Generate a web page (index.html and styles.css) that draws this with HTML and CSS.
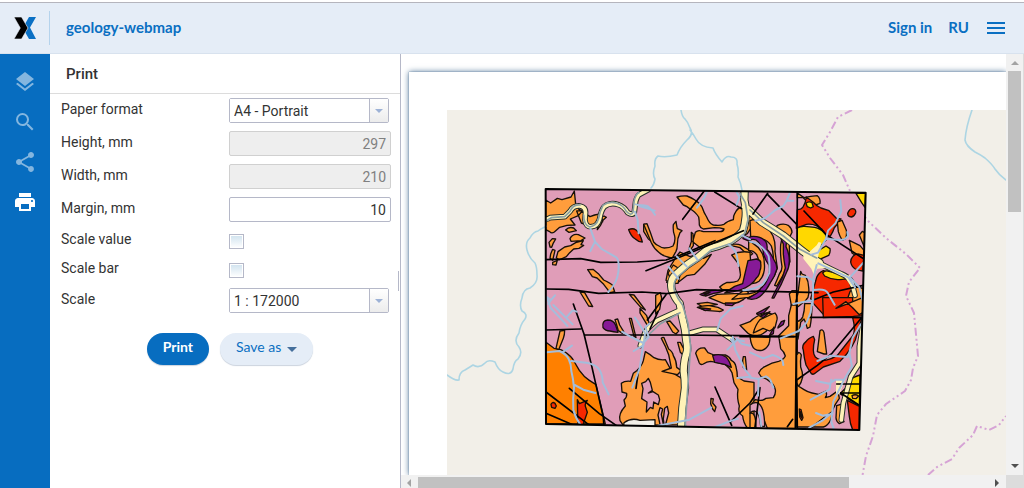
FILE: index.html
```html
<!DOCTYPE html>
<html lang="en">
<head>
<meta charset="utf-8">
<title>geology-webmap</title>
<link rel="stylesheet" href="styles.css">
</head>
<body>
<header class="header">
  <a class="logo" href="#" aria-label="Home">
    <svg width="22" height="22" viewBox="0 0 22 22"><path fill="#0a70c4" d="M15 0h7l-6 10.500 6 11.500h-7l-4-7 3-4-3-4z"/><path fill="#000" stroke="#e5edf7" stroke-width=".6" d="M0 0h7.500L14 11 7.500 22H0l6.300-11z"/></svg>
  </a>
  <h1 class="site"><a href="#">geology-webmap</a></h1>
  <nav class="header-nav">
    <a href="#">Sign in</a>
    <a href="#">RU</a>
    <button class="burger" type="button" aria-label="Menu"><i></i><i></i><i></i></button>
  </nav>
</header>
<main class="workspace">
  <nav class="rail">
    <button type="button" aria-label="Layers"><svg viewBox="0 0 24 24"><path d="M11.990 18.540l-7.370-5.730L3 14.070l9 7 9-7-1.630-1.270-7.380 5.740zM12 16l7.360-5.730L21 9l-9-7-9 7 1.630 1.270L12 16z"/></svg></button>
    <button type="button" aria-label="Search"><svg viewBox="0 0 24 24"><path d="M15.500 14h-.79l-.28-.27A6.471 6.471 0 0 0 16 9.500 6.500 6.500 0 1 0 9.500 16c1.610 0 3.090-.59 4.230-1.570l.27.28v.79l5 4.990L20.490 19l-4.990-5zm-6 0C7.010 14 5 11.990 5 9.500S7.010 5 9.500 5 14 7.010 14 9.500 11.990 14 9.500 14z"/></svg></button>
    <button type="button" aria-label="Share"><svg viewBox="0 0 24 24"><path d="M18 16.080c-.76 0-1.440.3-1.960.77L8.910 12.700c.05-.23.09-.46.09-.7s-.04-.47-.09-.7l7.050-4.110c.54.5 1.250.81 2.040.81 1.660 0 3-1.340 3-3s-1.340-3-3-3-3 1.340-3 3c0 .24.040.47.090.7L8.040 9.810C7.500 9.310 6.790 9 6 9c-1.660 0-3 1.340-3 3s1.340 3 3 3c.79 0 1.500-.31 2.040-.81l7.120 4.160c-.05.21-.08.43-.08.65 0 1.610 1.310 2.920 2.920 2.920s2.920-1.310 2.920-2.920-1.310-2.920-2.920-2.920z"/></svg></button>
    <button type="button" class="active" aria-label="Print map"><svg viewBox="0 0 24 24"><path d="M19 8H5c-1.660 0-3 1.340-3 3v6h4v4h12v-4h4v-6c0-1.660-1.340-3-3-3zm-3 11H8v-5h8v5zm3-7c-.55 0-1-.45-1-1s.45-1 1-1 1 .45 1 1-.45 1-1 1zm-1-9H6v4h12V3z"/></svg></button>
  </nav>
  <section class="panel">
    <h2 class="panel-title">Print</h2>
    <form class="form">
      <div class="row"><label for="paper">Paper format</label><div class="combo"><select id="paper"><option>A4 - Portrait</option></select><span class="trigger"></span></div></div>
      <div class="row"><label for="height">Height, mm</label><input class="num" id="height" type="text" value="297" disabled></div>
      <div class="row"><label for="width">Width, mm</label><input class="num" id="width" type="text" value="210" disabled></div>
      <div class="row"><label for="margin">Margin, mm</label><input class="num" id="margin" type="text" value="10"></div>
      <div class="row check-row"><label for="sv">Scale value</label><input class="check" id="sv" type="checkbox"></div>
      <div class="row check-row"><label for="sb">Scale bar</label><input class="check" id="sb" type="checkbox"></div>
      <div class="row"><label for="scale">Scale</label><div class="combo"><select id="scale"><option>1 : 172000</option></select><span class="trigger"></span></div></div>
      <div class="actions"><button class="btn primary" type="button">Print</button><button class="btn" type="button">Save as <span class="caret"></span></button></div>
    </form>
    <span class="grip"></span>
  </section>
  <section class="preview">
    <div class="viewport">
      <div class="paper">
        <svg class="map" viewBox="0 0 1677 1095" preserveAspectRatio="xMinYMin slice" role="img" aria-label="Geological map">
          <defs><clipPath id="sheet"><path d="M296 237L1256 248 1237 960 297 942z"/></clipPath></defs>
          <rect class="land" width="1677" height="1095"/>
          <g transform="translate(-1341 -330) scale(3)">
            <path class="river" d="M447 375q8 6 12 5 0-8 6-10 5-3 8-5 6 4 12-2 3-4 10-1 3 8 8 10 8 4 10-3 1-8 5-10 5-6 1-12-6-6 0-14 1-8 6-14 3-5-3-8-3-5 0-13 1-9 8-10 8-5 7-13 0-8-2-12-6-5-8-13-2-8 3-12 3-6 8-7 5-4 13-6M681 110q1 7 4 9 3 3 5 9 4 6-3 12-7 7-10 15-12 3-19 1-4 3-3 10-3 8 0 13-1 6-4 9M690 130q4 5 6 9 4 8 17 9 2 6 9 14 4-7 9-5 7 0 6 7 2 6 1 13 3 6 4 13M972 110q-6 17-7 30 1 6 10 12 6 3 10 6 7 6 10 11 4 6 11 11"/>
            <path class="boundary" d="M852 110l-14 7-8 15-8 13 8 13 13 17 7 16 17 29 19 18 20 16 14 14-11 14-3 14 8 17 4 43-5 12-2 12-6 11-19 13-9 11-4 21-7 20-4 22M928 475l9-8 15-8 7-11 14-13 4-9 12 4 10-5 7-9"/>
          </g>
          <g clip-path="url(#sheet)">
            <rect class="pink" width="1677" height="1095"/>
            <g transform="translate(279 210)">
              <path class="o" d="M17 60l15 9 20-14 14 4 27-8 10-18 4 40 10 15 10 5-12 14-24 10 14 18-24 1-22 6-16 14q-8 6-14-1l-12-6zM110 93l12-1 28 18 14-5 20-4 4 24-16 4-8 14-10-4-30-10zM180 114l12-6 7 4-10 9-8 16-9 12 2-16zM77 150q10-11 24-6l8 8-22 5zM90 176q8-16 25-12l20 10-12 8-30 2zM30 201l-3-14 10-11 10 1-8 14-4 11zM32 222l6-14 7 3-7 30-8-6zM49 233l5-18 20-14 18-4 15-9 23-6-7 12 8 2-14 9-16 2-12 11-10 12-22 10zM38 247l14-6-4 14-10-1zM143 269l16-1 16 13 16 19q24 12 26 15l7 20-14 3-19-25-20-19-14-4z"/>
              <path class="o" d="M120 336l14 2 24 42-12-2zM268 343l14 2 34 45-13-7zM311 133q8-3 12 10l10 40-8-6-14-23z"/>
              <path class="r" d="M266 149q12-6 22 1 12 9 19 36-12 0-21-9-13-8-20-28z"/>
            </g>
            <g transform="translate(579 210)">
              <path class="o" d="M111 51q14-4 30-3 14 5 25 13 14 8 20 20 6 18 14 30 8 20 20 24 20 3 32-2 10-10 28-14 0-12 4-18 8-18 22-20 20-6 30 2l4 50-18 28-40 20-30 14-36 4-20 16-38-30 8-28q8-8 18-4l6 2 50 0q10 0 12-8-12-4-28-4l-34 4q-10-4-12-12 0-14-2-24-12-18-26-24-8-8-20-12zM11 133l10-2q10 24 20 55 6 8 16 12 8 6 16 6 16 0 26-6 8-14 5-30-6-14-4-34l8-10q2 14 4 22l14 6-6 6q-8 16-8 36 0 12-4 20l-10 18q-10 2-18-2-14-4-22-12-16-12-24-30zM154 157l5 4 1 36-9 13-4-3 7-22zM110 228l10-12 30 14 34-10 6 15 24-12-20 30-20 20-10 10-24 4-28 22-20 4-14-12 6-30z"/>
              <path class="o" d="M100 255l-16 24 4 10 14-4-22 22 10 3 24 0 10-40zM274 193q20-2 30 3 20 10 34 25l-16 12q-8-20-22-30-18-6-40-7z"/>
              <path class="p" d="M310 165l25 11-6 8-20-8zM183 343q24-14 50-12l24-3q-12 10-36 12l-24 8z"/>
              <path class="o" d="M275 225q26-14 55-8l3 44q-4 24-14 40-10 14-22 20-20 10-50 8l-8-8q8-8 22-14 16 2 32-4 10-10 8-22-2-20-6-30zM207 353l24-10 68-3q10-8 18-12l8 10q-4 12-14 20-14 10-30 13h-30zM47 346l14-8 4 16-6 34-12 14zM172 371l30-4 30 6-44 8z"/>
            </g>
            <g transform="translate(909 210)">
              <path class="o" d="M0 122q18-8 45 6l24 40q8 20 6 46l7 50q-6 20-17 36-10 18-23 28-18 14-46 24l-50 6 20-16q26 2 46-4 20-8 30-22 14-16 20-38 10-20 8-42 0-20-6-38-10-16-24-20-16-8-38-8zM82 136q20-8 34 1 10 8 10 20-10 14-8 34 0 30 2 54-6 20-17 34l-23 39-6-2q8-18 14-34 8-10 8-22-6-34-4-66 4-16 4-30-6-12-20-18zM-4 187q8-2 14 4 16 10 23 23 10 14 10 36 2 16-2 29-4 16-14 25-10 8-27 6l-8-8q16 0 26-8 10-20 7-40 2-18-5-30-10-14-24-12z"/>
              <path class="p" d="M0 170q30-4 47 14 6 10 4 24 12 12 20 30 10 14 10 28-6 24-20 42-14 28-32 42-10 8-24 8l-12-2q10-6 20-12 14-6 20-20 14-10 20-28 8-18 4-40-12-16-17-36 0-12-6-20-6-14-16-20-8-4-20 0zM-6 242l26-5q14 5 12 12 2 14-2 22-2 16-10 22-8 14-20 22-20 14-50 20l-26 4q14-10 30-20 12-4 24-8z"/>
              <path class="p" d="M98 158l12 12q0 16-2 30 10 20 10 42 0 20-8 34-16 40-38 78l-6 0q8-18 18-36 16-26 22-54-4-20-6-42l0-30-8-18z"/>
              <path class="o" d="M142 39l20 14 20-4 20-2q10 8 8 23l-14 5-20-6-18-17-16 1z"/>
              <path class="r" d="M142 89q12 0 17-8 8-12 10-30l20 15q10 12 24 18l24 8 22 23 14 2q-8 14-20 26-4 12-10 22l-6 6-12-10-10-14-16-10q-14-6-30-4l-30 12z"/>
              <path class="y" d="M142 144q10-6 22-5l30 3q18 4 28 16 10 8 8 20l-14 16-8 16 20-12 12 8q2 12-4 20l-22 10-10 2-62-40z"/>
              <path class="y" d="M168 70q8-8 18-2l4 12-8 4-10-4z"/>
              <path class="o" d="M262 126l14-5 13 30q2 14-2 24l-10 6q-8-12-12-26zM298 181l32 16 12 14-2 22-20-4-14-10z"/>
              <path class="r" d="M293 100q6-15 16-14 10 2 8 12-4 11-13 13-11 0-11-11z"/>
              <path class="y" d="M318 40l29 0-2 42-10-14z"/>
              <path class="r" d="M302 246q0-10 6-16 6-8 16-8l18 4-4 47q-14-2-22-6-12-8-14-21zM200 292q6-14 20-20l30 12 40 14q12 2 14 10 10 4 10 14-4 18-10 30l-16 20-20 40h-40l-40-44-6-12z"/>
              <path class="y" d="M218 279q6-8 16-6l50 13 4 10q-14 4-30 2-20-2-34-10z"/>
              <path class="o" d="M337 154l9 5-4 40-14-34zM152 274l4 8 10 4q10 18 10 36 2 16-2 30-8 14-20 20l-10 8-8-10 8-30zM300 335q10-12 24-14l20 6v60l-50 2-6-20zM118 342l8-10h15v60l-16-10z"/>
            </g>
            <g transform="translate(279 585)">
              <path class="do" d="M18 112l24 18 20 4q22 10 36 28l20 34q14 20 30 30l20 13 28 118H18z"/>
              <path class="o" d="M60 78l14-2q0 14-4 24l-14 34-8-4zM225 44l8-2 6 18 12 20-4 5-12-8-4-14zM268 40l6 0 14 58-6-4z"/>
              <path class="p" d="M189 68q-4-22 14-23 18 0 24 16l7 21q-14-1-24-4-14 0-21-10z"/>
              <path class="r" d="M33 298q4-9 12-3l4 8-4 7-10-3zM112 284l6 12 24-10q-8 10-6 18l6 18-14 40-14 2-1-30z"/>
              <path class="o" d="M244 235q10-8 28-6l8-24 10-8q16-14 20-30l6-27q14 8 26 18 14 8 34 6l22 40 34 20v135l-182 2-10-14q-6-20 16-44l-4-18q10-10 8-20l-14-4z"/>
              <path class="land-line" d="M252 353q22-16 48-7l45-2v28h-95z"/>
              <path class="pink-line" d="M325 220l-8 10-12 5 4 16-4 30 16 10-2 30 12-14 8 4 2-20 14 8 4-15-4-14-16-10-14 4 12-8-6-24z"/>
              <path class="pink-line" d="M354 330l6-22 8 4-4 16 6 30-8 10zM374 310l8-6 4 20-8 30-4 18-4-30z"/>
            </g>
            <g transform="translate(579 585)">
              <path class="o" d="M64 100q4-4 8-2l14 34q12 8 14 20 10 16 10 35l14 10-12 12-46-10 28-10q-4-20-8-40-8-24-22-49zM113 112l8 0 16 30-2 14-14-14zM80 50l10-2 26 30-8 9-10-6zM0 10l20 22 10 30-6 2-24-40zM167 145q6-18 27-16l10 14 18 7 34 0q12 4 18 16 12 6 14 20 4 14 4 30l20 12 30 4v137h-20q-12-16-14-36-16-10-10-30-8-24-4-50l-12-20-6-30q-6-14-20-24-24-8-44-10-12 0-22 8-8 4-12-3z"/>
              <path class="p" d="M218 152q22-8 40 4 10 10 16 31l-20-9-30-6z"/>
              <path class="o" d="M310 155l6 0 4 40-10-8-2-20zM213 280l7 2-2 12 10 12-4 14-6-8-6-16zM172 7q16-6 36-5l26 5 16 8q-8 6-14 4l-40-3zM330 50q20-20 50-26 20 2 30 12-4 18-20 30-20 26-40 25-20 2-30-10l-20-20z"/>
              <path class="p" d="M178 8l34 4-16 5zM256-6l30 0-10 8-20-2zM180-32l30-6-20 10z"/>
            </g>
            <g transform="translate(909 585)">
              <path class="o" d="M10 84q6-24 20-40l30-14 15-6q8 8 6 20l-6 24-16 10-20-8-20 10zM86 92l30-30 0-30 8-32h18v370H52l-12-30q-10-18-8-24l-28-18 12-14q22 6 32-4l22-2q8-12 6-24-4-16-14-22-12-12-28-16l-8-12q6-14 20-20 20-12 40-15 14-4 20-16-4-14-14-22zM0 95l60 2q0 12-4 22-8 14-20 17-14 2-22-4-10-6-14-37z"/>
              <path class="pink-line" d="M0 300q26-20 38 14 6 20 6 50H32q-2-40-18-46-8 0-14 6z"/>
              <path class="o" d="M142 50q12-4 16-14 6-20 6-40h22q0 40-6 70l-8 4q-4-16-10-28l-10 10-8 50zM140 150l6-8q6 2 8 8-4 18-2 36 6 14 6 30-4 18-12 28l-6-10zM210 77q8-7 12 6l8 64h-8l-20-7zM140 240l22 14q12 8 24 10l20 4 22-10q4 12-2 20l14-4 20-14q8 10 8 20-12 16-20 34 0 16-6 30-8 18-22 22H140z"/>
              <path class="p" d="M20 25l38-20-16 18-20 6zM30 34l30-14-20 18zM84 66l10-16 10-4-4 12-16 11zM58 92l14-26-2 20z"/>
              <path class="r" d="M218-22h90v30l20-4 10 28-28 2-90 4zM308 38h28l-14 46q-4 22-16 40-16 26-36 45l-50 17-24 18q-6 6-12 2-8-12-16-26-6-22-8-44-6-16 8-26 6-10 22-16l4 10q-4 16-4 32 0 12 6 20 12 10 30 10 20-4 36-15 22-28 46-58 10-16 0-55z"/>
              <path class="o" d="M258 10l30-12 50-20v45l-10 6-20-21-20-18z"/>
              <path class="r" d="M292 286l36 18v70h-20q-8-18-10-40z"/>
              <path class="y" d="M270 266l18-18 10-22q14-12 32-16l-2 92-40-24z"/>
              <path class="o" d="M306 272q10-6 20 1l-8 8-10-1zM260 302l20-6q6 10 2 20-10 10-8 20l8 14-14 6q-10-8-10-18zM0 325q18-6 18 44H0z"/>
              <path class="r" d="M148 312l5 2 6 24-4 8-6-10z"/>
              <path class="p" d="M150 320l3 2 2 16-3-4z"/>
            </g>
            <g transform="translate(279 210)">
              <path class="edge" d="M10 120q16-4 20-7l44-3 16-16q10-18 30-16 20 4 16 26l-1 16q2 22 20 20 18-2 24-24 4-24 14-36 18-14 42-6 18 6 28 24 16 10 20-2l4-32q6-20 14-22l24-13"/>
              <path class="valley" d="M10 120q16-4 20-7l44-3 16-16q10-18 30-16 20 4 16 26l-1 16q2 22 20 20 18-2 24-24 4-24 14-36 18-14 42-6 18 6 28 24 16 10 20-2l4-32q6-20 14-22l24-13"/>
              <path class="flow" d="M14 125l20-12 40-3 16-16q10-23 30-19M131 105q0 30 18 36 20-3 26-23 4-24 14-42 18-14 42-6 18 6 28 24 16 16 20 2l4-36q6-20 14-22"/>
            </g>
            <g transform="translate(579 210)">
              <path class="edge" d="M120 390l-70 32q-24 18-35 35l-14 40M140 462l50-14h40l30 20 18 12M668 440l-10 60v50l-26 40-22 80-6 50M535 248q40 20 70 34 20 8 30 24l10 40"/>
              <path class="edge thick" d="M315 0l-2 60q6 24 4 50-2 24-8 42-20 24-44 34-30 14-60 20l-34 28-30 20-34 30q-18 16-12 44 10 28 24 42l8 44q10 36 12 70 4 16 2 30-10 28-10 60 4 24 4 50l-8 60-4 60 12 50M315 80l50 46q30 18 64 40l50 40q24 20 60 42"/>
              <path class="valley" d="M120 390l-70 32q-24 18-35 35l-14 40M140 462l50-14h40l30 20 18 12M668 440l-10 60v50l-26 40-22 80-6 50M535 248q40 20 70 34 20 8 30 24l10 40"/>
              <path class="valley thick" d="M315 0l-2 60q6 24 4 50-2 24-8 42-20 24-44 34-30 14-60 20l-34 28-30 20-34 30q-18 16-12 44 10 28 24 42l8 44q10 36 12 70 4 16 2 30-10 28-10 60 4 24 4 50l-8 60-4 60 12 50M315 80l50 46q30 18 64 40l50 40q24 20 60 42"/>
              <path class="valley-fill" d="M490 218l18-2 22-20 6-10 8 2-10 44 4 18 28 14-34 2-10 20-8-20-24-30zM588 598l28 0-18 44-10 4zM614 290l18-6-6 14 16 36z"/>
              <path class="flow" d="M300 40l16 28 8 50-10 42-40 30-60 20-34 28-30 20-34 30q-20 18-12 46 10 24 24 42l16 54 8 72-6 80-4 60-6 90 8 50M330 90l40 38 60 40 50 40 50 26M120 398l-60 34-44 42"/>
            </g>
            <g transform="translate(279 210)">
              <path class="fault" d="M17 239l105-3 60 11 110-1 86-6 42-14 105-44M20 327l66 1 90 12 130-4 74 5 90-12 144 4 100 2 120 3"/>
            </g>
            <g transform="translate(579 210)">
              <path class="fault" d="M192 34l-64 84M224 36l80 50M18 272l86-34 206-86M22 420l56-76"/>
            </g>
            <g transform="translate(909 210)">
              <path class="fault" d="M53 40l-44 62M53 44l88 90M142 36l-2 340-4 370M162 93l66 70 120 78M190 360l60-24 90-20"/>
            </g>
            <g transform="translate(279 585)">
              <path class="fault" d="M18 75l104-3M100-3l32 90 24 100 34 150 2 30M132 90h290l180 2 160 3M18 261l128 98M18 325l80 34M88 250l90 76 60 42M296 192l-8 58M330 72l24-52"/>
            </g>
            <g transform="translate(579 585)">
              <path class="fault" d="M225 246l50 115M270 352l60-58 30-46-16 126M300 95h170"/>
            </g>
            <g transform="translate(909 585)">
              <path class="fault" d="M178 37h158l-90 108-44 36-62 44M260 237h68M272 264h56M272 264l58 38M140 225l2 145M180 370l64-48M112 365l16-22"/>
            </g>
            <g transform="translate(279 210)">
              <path class="stream" d="M0 139h18M151 145l14 40 20 22 44 25q10 10 6 44-4 34-30 60M165 185l-14 28M288 73l42 14M285 95l8 25 3 40M18 350l15 10 12-14M33 360l-8 12M20 350l12 34 38 40 12 14M298 78l46 14"/>
            </g>
            <g transform="translate(579 210)">
              <path class="stream" d="M-5 75q22 0 30 5 12 10 20 24M201 35l-8 18-22 30M85 260l30 36M110 229l30 30M148 205l24 34M266 194q18 12 24 30l6 34M290 36l8 16-8 22M303 0l2 32M306 166l24 12"/>
            </g>
            <g transform="translate(909 210)">
              <path class="stream" d="M16 122q16-2 30-8l30-24 24-12 10-16h20M110 62l10-24M0 185q20 2 30 12 18 14 26 32 4 24 2 50-8 20-20 34-26 16-58 18M271 60l3 34-18 36-22 22-6 24-24 42-20 6M228 176l42 4q16 0 24-12l-2-12M200 255l-10 40-2 80M142 289l30 2 20 12M205 250l90 42 20 30M300 292l40-44M300 292l28 30 10 40M130 372l60-12M190 330q36-6 44 10l20 34"/>
            </g>
            <g transform="translate(279 585)">
              <path class="stream" d="M40 0l38 38 20 20M78 38l20-22 12 4M20 142l38-4q20 8 28 24 8 16 8 36 6 24 8 50-4 34-2 66 6 24 22 46M70 140l26-18M94 168l50 6q24 6 34 20 10 16 10 38l18 36M104 240l26 14 36 10M285 38l30 46-4 36-30 18M311 110l-12 80-22 58M246 80l24 14 40 20 16-18-10-30 12-10"/>
            </g>
            <g transform="translate(579 585)">
              <path class="stream" d="M54 362l94-18 66-36M226 366l40-16 28-9M232 75l10-34 30-30 36-8M278 95l8 40 30 60 16 20-40 4M262 134l30-30 20 5M278 112l-6-10"/>
            </g>
            <g transform="translate(909 585)">
              <path class="stream" d="M0 142l40 18 28-10q22 6 30 18l2 12M-40 100l14 16 26 6M0 218l26 4 22-8q12 6 16 18l6 16M26 222l-2 50M28 322l6 42M92 100l54-22 24-26 12-30 4-30M332 58l-24 40-10 46-6 12-50-4-40 16M298 144l8 40-24 40-26 0-18 12-40-8M244 224l-6 30-56 30M284 220l-34 70-6 60 8 24M248 322l-30 24-40 22M248 326l-30 6-20-8"/>
            </g>
          </g>
          <path class="frame" d="M296 237L1256 248 1237 960 297 942z"/>
        </svg>
      </div>
    </div>
    <div class="vbar"><svg width="8" height="5" viewBox="0 0 8 5"><path fill="#a3a3a3" d="M0 4l4-4 4 4z"/></svg><span class="thumb"></span><svg class="end" width="8" height="5" viewBox="0 0 8 5"><path fill="#505050" d="M0 0h8L4 4z"/></svg></div>
    <div class="hbar"><svg width="5" height="8" viewBox="0 0 5 8"><path fill="#a3a3a3" d="M4 0v8L0 4z"/></svg><span class="thumb"></span><svg class="end" width="5" height="8" viewBox="0 0 5 8"><path fill="#505050" d="M0 0v8l4-4z"/></svg></div>
    <div class="corner"></div>
  </section>
</main>
</body>
</html>
```
FILE: styles.css
```css
* { box-sizing: border-box; }
body {
  margin: 0;
  height: 100vh;
  display: flex;
  flex-direction: column;
  padding-top: 2px;
  overflow: hidden;
  background: #fff;
  color: #333;
  font: 14px/20px Roboto, sans-serif;
}
button, input, select { font: inherit; color: inherit; }
button { border: 0; padding: 0; background: none; cursor: pointer; }
a { color: #0a6fc2; text-decoration: none; }

.header {
  flex: none;
  display: flex;
  align-items: center;
  height: 52px;
  border-top: 1px solid #b5b5bd;
  border-bottom: 1px solid #d8e2ee;
  background: #e5edf7;
  font: 700 15px/20px Lato, sans-serif;
}
.logo {
  display: flex;
  align-items: center;
  justify-content: center;
  width: 50px;
  height: 34px;
  border-right: 1px solid #b5d3ec;
}
.site { margin: 0; padding: 0 0 2px 16px; font: inherit; }
.header-nav { display: flex; align-items: center; gap: 16px; margin-left: auto; padding-right: 19px; }
.header-nav a { padding-bottom: 2px; }
.burger { display: flex; flex-direction: column; gap: 3px; width: 18px; margin-left: 2px; }
.burger i { height: 2px; background: #0a6fc2; }

.workspace { flex: 1; min-height: 0; display: flex; }
.rail { flex: none; display: flex; flex-direction: column; align-items: center; gap: 16px; width: 50px; padding-top: 16px; background: #076dc0; }
.rail button { display: flex; width: 24px; height: 24px; color: #84b6df; }
.rail .active { color: #fff; }
.rail svg { width: 24px; height: 24px; fill: currentColor; }

.panel { position: relative; flex: none; width: 351px; border-right: 1px solid #b5b8c8; }
.panel-title { margin: 0; height: 40px; padding: 10px 16px; border-bottom: 1px solid #dcdcdc; font: 500 15px/20px Roboto, sans-serif; }
.form { display: flex; flex-direction: column; gap: 8px; padding: 4px 9px 0 11px; }
.row { display: grid; grid-template-columns: 168px 1fr; height: 25px; }
.row label { padding-top: 1px; }
.check-row { height: 21px; }
.check-row label { padding-top: 0; line-height: 18px; }
.combo { display: flex; margin-right: 2px; border: 1px solid #b5b8c8; border-radius: 2px; }
.combo select { flex: 1; min-width: 0; appearance: none; border: 0; padding: 0 4px; background: #fff; }
.trigger { display: flex; align-items: center; justify-content: center; width: 19px; border-left: 1px solid #b5b8c8; background: linear-gradient(#fff, #ececec); }
.trigger::before, .caret { content: ""; border: 4px solid transparent; border-bottom: 0; border-top-color: #9db2d6; }
.num { width: 100%; min-width: 0; border: 1px solid #b5b8c8; border-radius: 2px; padding: 0 4px; background: #fff; text-align: right; }
.num:disabled { border-color: #d0d0d0; background: #eee; color: #808080; }
.check { appearance: none; align-self: center; width: 15px; height: 15px; margin: 2px 0 0; border: 1px solid #b5b8c8; box-shadow: inset 0 0 0 1px #fff; background: linear-gradient(#cfe2ee, #fff); }
.actions { display: flex; justify-content: center; gap: 11px; padding: 12px 0 0 8px; }
.btn { display: flex; align-items: center; height: 32px; padding: 0 16px 4px; border-radius: 16px; background: #e5edf7; box-shadow: 0 1px 1px #cbd3de; color: #0a6fc2; font: 14px/20px Lato, sans-serif; }
.primary { background: #076dc0; color: #fff; font-weight: 700; }
.caret { margin: 4px 0 0 6px; border-width: 5px 5px 0; border-top-color: #456f9c; }
.grip { position: absolute; right: 1px; top: 50%; width: 1px; height: 20px; background: #b5b8c8; }

.preview { flex: 1; min-width: 0; display: grid; grid-template: 1fr 13px / 1fr 18px; }
.viewport { min-width: 0; min-height: 0; overflow: hidden; padding: 18px 0 0 8px; display: flex; }
.paper { flex: 1; min-width: 0; padding: 38px 0 0 38px; background: #fff; box-shadow: 0 0 6px #4f7396, 0 0 1px #4f7396; display: flex; }
.vbar, .hbar { display: flex; align-items: center; background: #f1f1f1; }
.vbar { flex-direction: column; padding: 7px 0 6px; border-right: 1px solid #dcdcdc; }
.vbar .thumb { width: 13px; height: 141px; margin-top: 5px; background: #c1c1c1; }
.hbar { padding: 2px 6px 0; }
.hbar .thumb { width: 431px; height: 11px; margin-left: 6px; background: #c1c1c1; }
.end { margin-top: auto; }
.hbar .end { margin: 0 0 0 auto; }
.corner { background: #dcdcdc; }

.map { flex: 1; min-width: 0; height: 100%; stroke-linejoin: round; stroke-linecap: round; }
.land { fill: #f2efe8; }
.pink { fill: #e09db8; }
.river { fill: none; stroke: #add5e3; stroke-width: 1.600; }
.boundary { fill: none; stroke: #d6a3d5; stroke-width: 2; stroke-linecap: butt; stroke-dasharray: 8 3 2 3 2 3; }
.o, .do, .r, .y, .p, .land-line, .pink-line { stroke: #181008; stroke-width: 4; }
.o { fill: #ff9d3c; }
.do { fill: #ff8000; }
.r { fill: #f62800; }
.y { fill: #ffd800; }
.p { fill: #861a96; }
.land-line { fill: #f2efe8; }
.pink-line { fill: #e09db8; }
.edge { fill: none; stroke: #27302c; stroke-width: 17; }
.valley { fill: none; stroke: #fff3b8; stroke-width: 11; }
.edge.thick { stroke-width: 25; }
.valley.thick { stroke-width: 19; }
.valley-fill { fill: #fff3b8; }
.flow { fill: none; stroke: #8a9fa3; stroke-width: 5; }
.fault { fill: none; stroke: #000; stroke-width: 5; }
.stream { fill: none; stroke: #a4bddb; stroke-width: 6; }
.frame { fill: none; stroke: #000; stroke-width: 6; }
```
